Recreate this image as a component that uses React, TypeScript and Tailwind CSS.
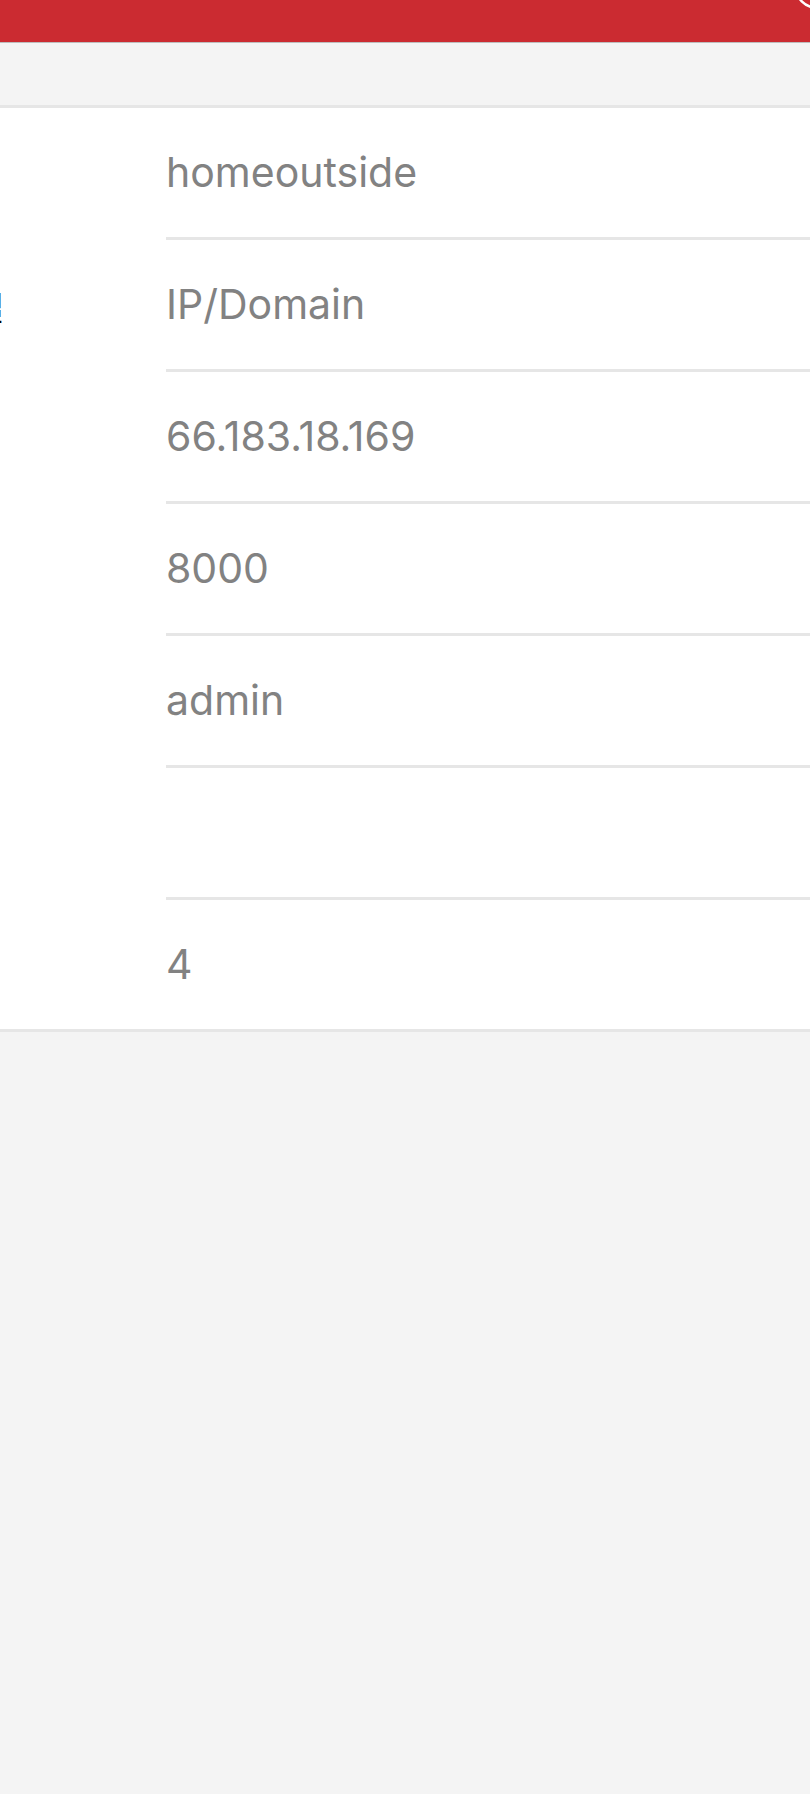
const rows = [
  { label: "", value: "homeoutside" },
  { label: "등록일", value: "IP/Domain" },
  { label: "", value: "66.183.18.169" },
  { label: "", value: "8000" },
  { label: "", value: "admin" },
  { label: "", value: "" },
  { label: "", value: "4" },
];

export default function App() {
  return (
    <div className="min-h-[1794px] overflow-hidden bg-[#f4f4f4] font-['Inter','Noto_Sans_CJK_KR',sans-serif]">
      {/* header, scrolled partly out of view */}
      <header className="h-[43px] overflow-hidden border-b border-[#bdbdbd] bg-[#cb2b31]">
        <div className="-mt-[85px] flex h-[140px] items-center">
          <span className="ml-[292px] text-[30px] font-medium text-white">장치 추가</span>
          <svg className="ml-auto -mr-[33px] h-[50px] w-[50px] shrink-0" viewBox="0 0 50 50" fill="none">
            <circle cx="25" cy="25" r="23" stroke="white" strokeWidth="2.5" />
          </svg>
        </div>
      </header>

      <div className="h-[62px]" />

      <div className="border-y-[3px] border-[#e6e6e6] bg-white">
        {rows.map((row, i) => (
          <div key={i} className="flex">
            <div className="flex w-[166px] shrink-0 items-center overflow-visible">
              {row.label && (
                <span className="-ml-[84px] whitespace-nowrap font-['Noto_Sans_CJK_KR',sans-serif] text-[32px] leading-none text-black">
                  {row.label}
                </span>
              )}
            </div>
            <div
              className={
                i < rows.length - 1
                  ? "flex h-[132px] flex-1 items-center border-b-[3px] border-[#e6e6e6]"
                  : "flex h-[129px] flex-1 items-center"
              }
            >
              <span className="text-[41px] leading-none text-[#828282]">{row.value}</span>
            </div>
          </div>
        ))}
      </div>
    </div>
  );
}
